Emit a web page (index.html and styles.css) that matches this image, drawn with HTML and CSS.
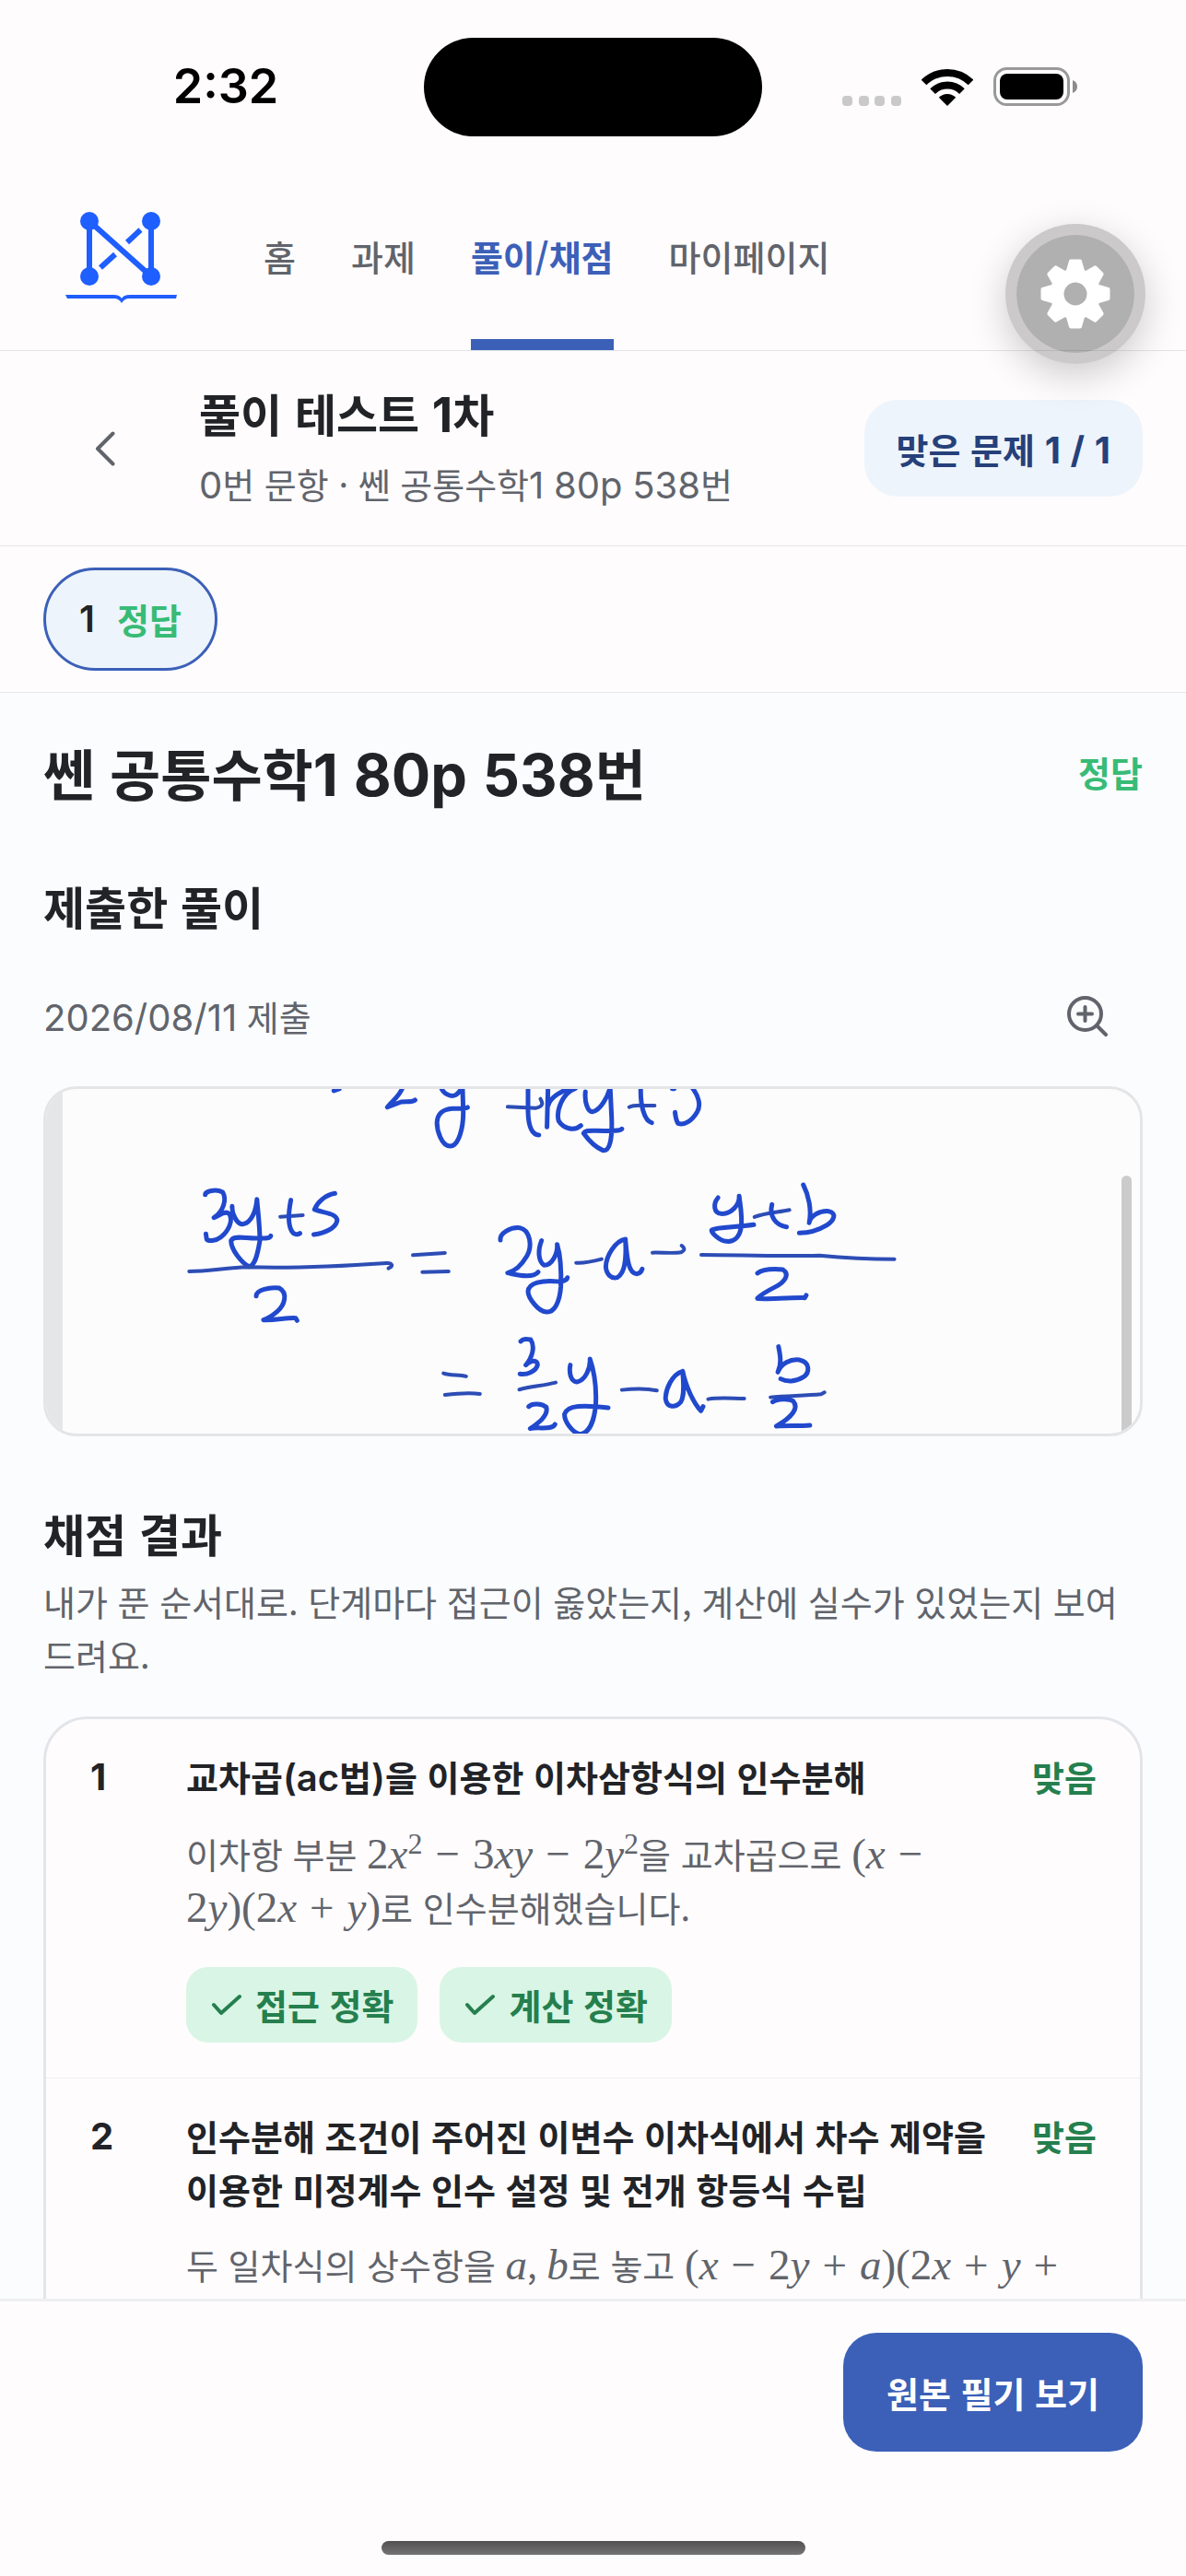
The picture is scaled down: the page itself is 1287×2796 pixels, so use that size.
FILE: index.html
```html
<!DOCTYPE html>
<html lang="ko">
<head>
<meta charset="utf-8">
<meta name="viewport" content="width=device-width, initial-scale=1">
<title>풀이 테스트 1차</title>
<link rel="stylesheet" href="styles.css">
</head>
<body>
<div class="app">
  <div class="status">
    <span class="status-time">2:32</span>
    <span class="island"></span>
    <div class="status-icons">
      <svg class="icon-signal" viewBox="0 0 64 11" aria-hidden="true">
        <rect width="11" height="11" rx="4"/><rect x="18" width="11" height="11" rx="4"/><rect x="35" width="11" height="11" rx="4"/><rect x="53" width="11" height="11" rx="4"/>
      </svg>
      <svg class="icon-wifi" viewBox="0 0 56 41" aria-hidden="true">
        <path d="M28 41L18.8 31.800A13 13 0 0 1 37.200 31.800Z"/>
        <path class="band" d="M12.100 25.100A22.500 22.500 0 0 1 43.900 25.100"/>
        <path class="band" d="M2.500 15.500A36.300 36.300 0 0 1 53.500 15.500"/>
      </svg>
      <svg class="icon-battery" viewBox="0 0 92 42" aria-hidden="true">
        <rect class="shell" x="1.500" y="1.500" width="80" height="39" rx="13"/>
        <rect x="7" y="7" width="69" height="28" rx="8"/>
        <path class="tip" d="M86 14Q91 16 91 21T86 28Z"/>
      </svg>
    </div>
  </div>

  <header class="topnav">
    <a class="logo" href="#" aria-label="홈으로">
      <svg viewBox="0 0 122 100">
        <g class="logo-line">
          <path d="M26 10V70M93 10V70M26 10L93 70"/>
          <path d="M81.500 19.500L67 33M54 46L38 60.500"/>
        </g>
        <circle cx="26" cy="10" r="10"/><circle cx="93" cy="10" r="10"/><circle cx="26" cy="70" r="10"/><circle cx="93" cy="70" r="10"/>
        <path d="M0 90H52Q59 90 61 94Q63 90 70 90H121L120 94H69Q64 94 61 99Q58 94 53 94H2Z"/>
      </svg>
    </a>
    <nav class="tabs">
      <a href="#">홈</a>
      <a href="#">과제</a>
      <a class="active" href="#" aria-current="page">풀이/채점</a>
      <a href="#">마이페이지</a>
    </nav>
  </header>

  <div class="test-head">
    <button class="back" type="button" aria-label="뒤로">
      <svg viewBox="0 0 22 38"><path d="M19.500 2.500L3 19L19.500 35.500"/></svg>
    </button>
    <div class="test-title">
      <p class="name">풀이 테스트 <span class="latin">1</span>차</p>
      <p class="meta"><span class="latin">0</span>번 문항 · 쎈 공통수학<span class="latin">1</span> <span class="latin">80p</span> <span class="latin">538</span>번</p>
    </div>
    <button class="score" type="button">맞은 문제 <span class="latin">1</span> <span class="latin">/</span> <span class="latin">1</span></button>
  </div>

  <div class="problems">
    <button class="problem" type="button"><span class="latin">1</span><span class="ok">정답</span></button>
  </div>

  <main class="content">
    <div class="problem-head">
      <h1>쎈 공통수학<span class="latin">1</span> <span class="latin">80p</span> <span class="latin">538</span>번</h1>
      <span class="ok">정답</span>
    </div>

    <section>
      <h2>제출한 풀이</h2>
      <div class="submitted">
        <span><span class="latin">2026/08/11</span> 제출</span>
        <button class="zoom" type="button" aria-label="확대">
          <svg viewBox="0 0 44 44"><circle cx="19.500" cy="19.500" r="17.500"/><path d="M32.500 32.500L42 42M19.500 12V27M12 19.500H27"/></svg>
        </button>
      </div>
      <div class="sheet">
        <svg class="ink" viewBox="0 0 1187 374" role="img" aria-label="손으로 쓴 풀이">
          <rect class="margin" width="18" height="374"/>
          <g transform="translate(-10 -12) scale(.3954 .3333)">
            <path d="M815 42L830 36"/>
            <path d="M1005 26C1000 55 975 75 962 95L1000 78C1015 76 1030 80 1038 72"/>
            <path d="M1108 25C1112 50 1135 65 1150 55C1163 45 1166 35 1168 20L1170 100C1172 160 1158 222 1134 222C1110 222 1098 170 1098 145C1100 110 1120 102 1140 100C1160 98 1175 102 1182 96"/>
            <path class="fine" d="M1292 94L1370 98C1392 92 1388 80 1382 68"/>
            <path d="M1348 25L1348 110C1349 160 1358 185 1378 186M1403 25L1400 160M1403 90C1410 60 1440 45 1465 30M1478 34C1440 50 1425 110 1432 140C1445 165 1475 175 1493 155"/>
            <path d="M462 380C462 370 490 360 510 372C522 395 512 435 486 455C500 450 515 430 528 442C540 465 525 500 505 518C490 532 470 532 466 525L464 508"/>
            <path d="M536 418C535 440 548 478 566 476C590 470 602 430 604 395C606 430 612 480 612 530C605 580 598 612 582 614C565 605 532 560 533 530C540 512 570 522 600 522C625 522 640 524 642 514"/>
            <path class="fine" d="M668 452L730 447"/>
            <path d="M697 398C690 440 690 480 700 500C705 510 715 512 722 506M818 376C790 382 770 405 762 428C785 440 825 440 824 465C820 490 790 505 760 510"/>
            <path class="fine" d="M418 630C470 630 520 618 580 616C700 620 850 612 960 603C975 602 980 612 965 620"/>
            <path d="M602 710C602 690 640 680 665 684C690 700 680 740 660 760C645 775 630 785 622 788C650 790 690 780 710 782L714 790"/>
            <path class="fine" d="M1032 577L1120 570M1058 632L1130 630"/>
            <path d="M1272 528C1270 505 1300 485 1325 488C1355 495 1360 550 1345 580C1330 610 1310 630 1292 635C1315 640 1360 655 1376 632"/>
            <path d="M1385 530C1375 560 1375 595 1392 610C1415 610 1430 570 1428 542C1435 570 1440 620 1438 680C1435 730 1420 765 1398 762C1375 760 1348 715 1348 695C1350 665 1390 660 1420 662C1440 665 1455 660 1456 650"/>
            <path class="fine" d="M1480 602C1505 604 1525 598 1550 590"/>
            <path d="M1328 858C1335 848 1345 850 1355 852C1368 875 1360 910 1342 935C1360 915 1375 920 1374 935C1370 955 1345 968 1326 964M1350 1070C1360 1058 1385 1060 1398 1072C1405 1100 1375 1125 1354 1142C1375 1135 1415 1148 1422 1128"/>
            <path class="fine" d="M1324 1015C1355 1005 1390 1002 1424 992"/>
            <path d="M1464 935C1460 960 1465 988 1482 990C1505 985 1520 945 1518 915C1528 950 1536 1000 1534 1060C1530 1120 1515 1158 1490 1160C1470 1155 1448 1120 1448 1095C1455 1065 1500 1065 1568 1074"/>
            <path class="fine" d="M1116 962C1135 970 1160 965 1178 972M1120 1032C1150 1028 1190 1025 1216 1029"/>
          </g>
          <g transform="translate(590 -12) scale(.3954 .3333)">
            <path d="M-12 45C-15 80 -5 112 8 110C30 105 50 60 56 30L60 130C62 200 55 240 36 236C15 225 -5 200 -17 180C-12 170 0 172 20 172C50 172 80 175 88 166"/>
            <path class="fine" d="M108 95C125 84 150 92 178 90"/>
            <path d="M140 30C138 90 150 140 170 146M226 35H232M280 30C300 60 305 90 295 110C280 140 260 155 242 148C238 140 235 125 234 112"/>
            <path d="M98 525C70 530 45 580 44 615C45 640 60 655 75 650C100 635 100 575 98 530C102 580 105 640 130 638C140 636 142 630 144 622"/>
            <path class="fine" d="M172 569C200 568 230 572 250 568C265 560 258 550 252 546"/>
            <path d="M352 390C338 410 340 440 360 442C390 445 412 410 410 385C412 410 420 450 415 490C410 520 395 535 375 532C355 530 330 500 335 495C350 485 400 487 450 478"/>
            <path class="fine" d="M452 453C480 440 515 438 548 430"/>
            <path d="M500 412C492 450 510 480 540 485M586 348C600 380 610 430 602 472C605 450 630 432 655 434C680 440 670 465 650 480C625 498 600 505 575 505"/>
            <path class="fine" d="M306 576C400 576 520 582 630 578C700 586 760 590 836 590"/>
            <path d="M460 636C475 622 510 622 530 624C550 640 535 665 510 680C485 695 470 705 460 718C480 722 540 715 590 716L594 708"/>
            <path class="fine" d="M88 1016C120 1012 160 1012 184 1018M325 1046C355 1040 390 1044 424 1044"/>
            <path d="M255 955C225 965 208 1015 208 1045C212 1075 235 1075 250 1055C262 1030 256 985 255 955C262 1000 285 1060 305 1084L311 1070"/>
            <path d="M518 875C522 900 528 930 516 958C525 930 550 915 575 918C605 925 605 960 585 975C565 990 540 990 524 980"/>
            <path class="fine" d="M496 1040C540 1035 590 1035 635 1030L644 1024"/>
            <path d="M502 1055C515 1045 545 1043 558 1052C575 1075 555 1105 512 1134C540 1132 580 1134 604 1131"/>
          </g>
        </svg>
        <span class="scroll-thumb"></span>
      </div>
    </section>

    <section>
      <h2>채점 결과</h2>
      <p class="lead">내가 푼 순서대로. 단계마다 접근이 옳았는지, 계산에 실수가 있었는지 보여드려요.</p>
      <ol class="steps">
        <li>
          <span class="num latin">1</span>
          <h3>교차곱<span class="latin">(ac</span>법<span class="latin">)</span>을 이용한 이차삼항식의 인수분해</h3>
          <span class="verdict">맞음</span>
          <div class="detail">
            <p>이차항 부분 <span class="math">2<i>x</i><sup>2</sup><b>−</b></span><wbr><span class="math">3<i>xy</i><b>−</b></span><wbr><span class="math">2<i>y</i><sup>2</sup></span>을 교차곱으로 <span class="math">(<i>x</i><b>−</b></span><wbr><span class="math">2<i>y</i>)(2<i>x</i><b>+</b></span><wbr><span class="math"><i>y</i>)</span>로 인수분해했습니다.</p>
            <div class="tags">
              <span class="tag"><svg viewBox="0 0 34 24"><path d="M3 12L11 21L31 3"/></svg>접근 정확</span>
              <span class="tag"><svg viewBox="0 0 34 24"><path d="M3 12L11 21L31 3"/></svg>계산 정확</span>
            </div>
          </div>
        </li>
        <li>
          <span class="num latin">2</span>
          <h3>인수분해 조건이 주어진 이변수 이차식에서 차수 제약을 이용한 미정계수 인수 설정 및 전개 항등식 수립</h3>
          <span class="verdict">맞음</span>
          <div class="detail">
            <p>두 일차식의 상수항을 <span class="math"><i>a</i></span>, <span class="math"><i>b</i></span>로 놓고 <span class="math">(<i>x</i><b>−</b></span><wbr><span class="math">2<i>y</i><b>+</b></span><wbr><span class="math"><i>a</i>)(2<i>x</i><b>+</b></span><wbr><span class="math"><i>y</i><b>+</b></span></p>
          </div>
        </li>
      </ol>
    </section>
  </main>

  <footer class="actions">
    <button class="primary" type="button">원본 필기 보기</button>
    <span class="home-bar"></span>
  </footer>

  <button class="fab" type="button" aria-label="설정">
    <svg viewBox="-38 -38 76 76">
      <defs><path id="tooth" d="M-5 -35.500H5L8 -25V-20H-8V-25Z"/></defs>
      <circle r="20" />
      <g class="teeth">
        <use href="#tooth"/><use href="#tooth" transform="rotate(45)"/><use href="#tooth" transform="rotate(90)"/><use href="#tooth" transform="rotate(135)"/>
        <use href="#tooth" transform="rotate(180)"/><use href="#tooth" transform="rotate(225)"/><use href="#tooth" transform="rotate(270)"/><use href="#tooth" transform="rotate(315)"/>
      </g>
    </svg>
  </button>
</div>
</body>
</html>
```
FILE: styles.css
```css
* { box-sizing: border-box; }

body {
  margin: 0;
  background: #fefcfd;
  color: #212327;
  font: 400 38px/58px "Noto Sans CJK KR", "Inter", sans-serif;
}

h1, h2, h3, p, ol { margin: 0; padding: 0; }
a { color: inherit; text-decoration: none; }
button { margin: 0; border: 0; padding: 0; background: none; color: inherit; font: inherit; }
svg { display: block; flex: none; }

.latin { font-family: "Inter", sans-serif; font-size: 40px; line-height: 1; }

.app { position: relative; display: flex; flex-direction: column; height: 100vh; }

/* status bar */
.status {
  display: grid;
  grid-template-columns: 1fr 367px 1fr;
  align-items: center;
  height: 180px;
  padding-top: 8px;
  color: #000;
}
.status-time { justify-self: center; padding-left: 30px; font: 600 52px/60px "Inter", sans-serif; }
.island { height: 107px; border-radius: 54px; background: #000; }
.status-icons { display: flex; align-items: flex-end; justify-self: center; gap: 22px; padding-right: 30px; }
.icon-signal { width: 64px; height: 11px; fill: #cac9ca; }
.icon-wifi { width: 56px; height: 41px; }
.icon-wifi .band { fill: none; stroke: #000; stroke-width: 8; }
.icon-battery { width: 92px; height: 42px; }
.icon-battery .shell { fill: none; stroke: #999; stroke-width: 3; }
.icon-battery .tip { fill: #8c8c8c; }

/* navigation */
.topnav {
  display: flex;
  flex: none;
  height: 201px;
  padding-left: 71px;
  border-bottom: 1px solid #e2e4e8;
}
.logo { align-self: center; margin-right: 93px; }
.logo svg { width: 122px; height: 100px; fill: #1f5eff; }
.logo-line { fill: none; stroke: #1f5eff; stroke-width: 6; }
.tabs { display: flex; gap: 60px; color: #61646b; font-weight: 500; }
.tabs a { display: flex; align-items: center; border: solid transparent; border-width: 8px 0 12px; }
.tabs .active { border-bottom-color: #3c60b8; color: #3c60b8; font-weight: 700; }

/* test header */
.test-head {
  display: flex;
  flex: none;
  align-items: center;
  height: 212px;
  padding: 0 47px 0 54px;
  border-bottom: 1px solid #e5e6e9;
}
.back { display: grid; place-items: center; width: 120px; height: 120px; margin-right: 42px; }
.back svg { width: 22px; height: 38px; fill: none; stroke: #61646b; stroke-width: 4; stroke-linecap: round; stroke-linejoin: round; }
.test-title { display: grid; flex: 1; gap: 5px; }
.name { font-size: 49px; line-height: 72px; font-weight: 700; }
.name .latin { font-size: 52px; }
.meta { line-height: 72px; color: #61646b; }
.score { height: 105px; padding: 0 35px; border-radius: 36px; background: #edf4fb; color: #26407a; font-weight: 700; }

.problems { flex: none; padding: 23px 47px; border-bottom: 1px solid #e5e6e9; }
.problem {
  display: flex;
  align-items: center;
  gap: 24px;
  height: 112px;
  padding: 0 36px;
  border: 3px solid #3c60b8;
  border-radius: 56px;
  background: #edf4fb;
  font-weight: 600;
}
.ok { color: #38bb76; font-weight: 700; }

/* scrolling content */
.content {
  flex: 1;
  min-height: 0;
  padding: 46px 47px;
  overflow-y: auto;
  scrollbar-width: none;
  background: #fafcfe;
}
.problem-head { display: flex; align-items: center; justify-content: space-between; }
h1 { font-size: 60px; line-height: 80px; font-weight: 700; }
h1 .latin { font-size: 63px; }
section { padding-top: 73px; }
h2 { font-size: 49px; line-height: 64px; font-weight: 700; }

.submitted { display: flex; align-items: center; justify-content: space-between; height: 120px; margin: 28px 0 16px; color: #61646b; }
.zoom { display: grid; place-items: center; width: 120px; height: 120px; }
.zoom svg { width: 44px; height: 44px; fill: none; stroke: #61646b; stroke-width: 4; stroke-linecap: round; }

.sheet { position: relative; overflow: hidden; border: 3px solid #e4e5e7; border-radius: 36px; background: #fcfcfd; }
.ink { width: 100%; height: auto; fill: none; stroke: #2149cd; stroke-linecap: round; stroke-linejoin: round; }
.ink path { stroke-width: 5px; vector-effect: non-scaling-stroke; }
.ink .fine { stroke: #2d4db5; stroke-width: 4px; }
.ink .margin { fill: #e5e6e8; stroke: none; }
.scroll-thumb { position: absolute; top: 25%; right: 9px; bottom: 0; width: 11px; border-radius: 6px 6px 0 0; background: #cbcbcc; }

.lead { margin: 13px 0 38px; color: #61646b; }

.steps { list-style: none; border: 3px solid #e3e5e8; border-radius: 48px; background: #fefcfd; }
.steps li {
  display: grid;
  grid-template-columns: 104px 1fr auto;
  align-content: start;
  min-height: 389px;
  padding: 33px 47px 37px 48px;
}
.steps li + li { border-top: 1px solid #eeeff1; }
.num.latin { line-height: 60px; font-weight: 700; }
h3 { font-size: 38px; line-height: 58px; font-weight: 600; }
.verdict { padding-left: 24px; color: #257f4e; font-weight: 700; }
.detail { grid-column: 2 / -1; margin-top: 24px; color: #61646b; }
.detail p { padding-right: 16px; }

.math { font-family: "Liberation Serif", serif; font-size: 47px; line-height: 1; white-space: nowrap; }
.math b { margin: 0 14px; font-weight: 400; }
.math sup { font-size: 32px; line-height: 1; vertical-align: 16px; }

.tags { display: flex; flex-wrap: wrap; gap: 24px; margin-top: 36px; }
.tag {
  display: flex;
  align-items: center;
  gap: 14px;
  height: 82px;
  padding: 0 26px 0 27px;
  border-radius: 24px;
  background: #d9f5e5;
  color: #257f4e;
  font-weight: 700;
}
.tag svg { width: 34px; height: 24px; fill: none; stroke: #257f4e; stroke-width: 4; stroke-linecap: round; stroke-linejoin: round; }

/* bottom actions */
.actions {
  display: flex;
  flex: none;
  flex-direction: column;
  align-items: flex-end;
  justify-content: space-between;
  height: 301px;
  padding: 34px 47px 23px;
  border-top: 3px solid #eeeff1;
}
.primary { height: 129px; padding: 0 47px; border-radius: 36px; background: #3c60b8; color: #fff; font-weight: 600; }
.home-bar { align-self: center; width: 460px; height: 15px; border-radius: 8px; background: linear-gradient(#525051, #757374); }

/* floating settings button */
.fab {
  position: absolute;
  top: 243px;
  right: 44px;
  display: grid;
  place-items: center;
  width: 152px;
  height: 152px;
  border: 12px solid rgba(0, 0, 0, .2);
  border-radius: 50%;
  background: rgba(0, 0, 0, .3) padding-box;
  box-shadow: 0 12px 42px rgba(0, 0, 0, .2);
}
.fab svg { width: 76px; height: 76px; }
.fab circle { fill: none; stroke: #fff; stroke-width: 15; }
.teeth { fill: #fff; stroke: #fff; stroke-width: 4; stroke-linejoin: round; }
```
